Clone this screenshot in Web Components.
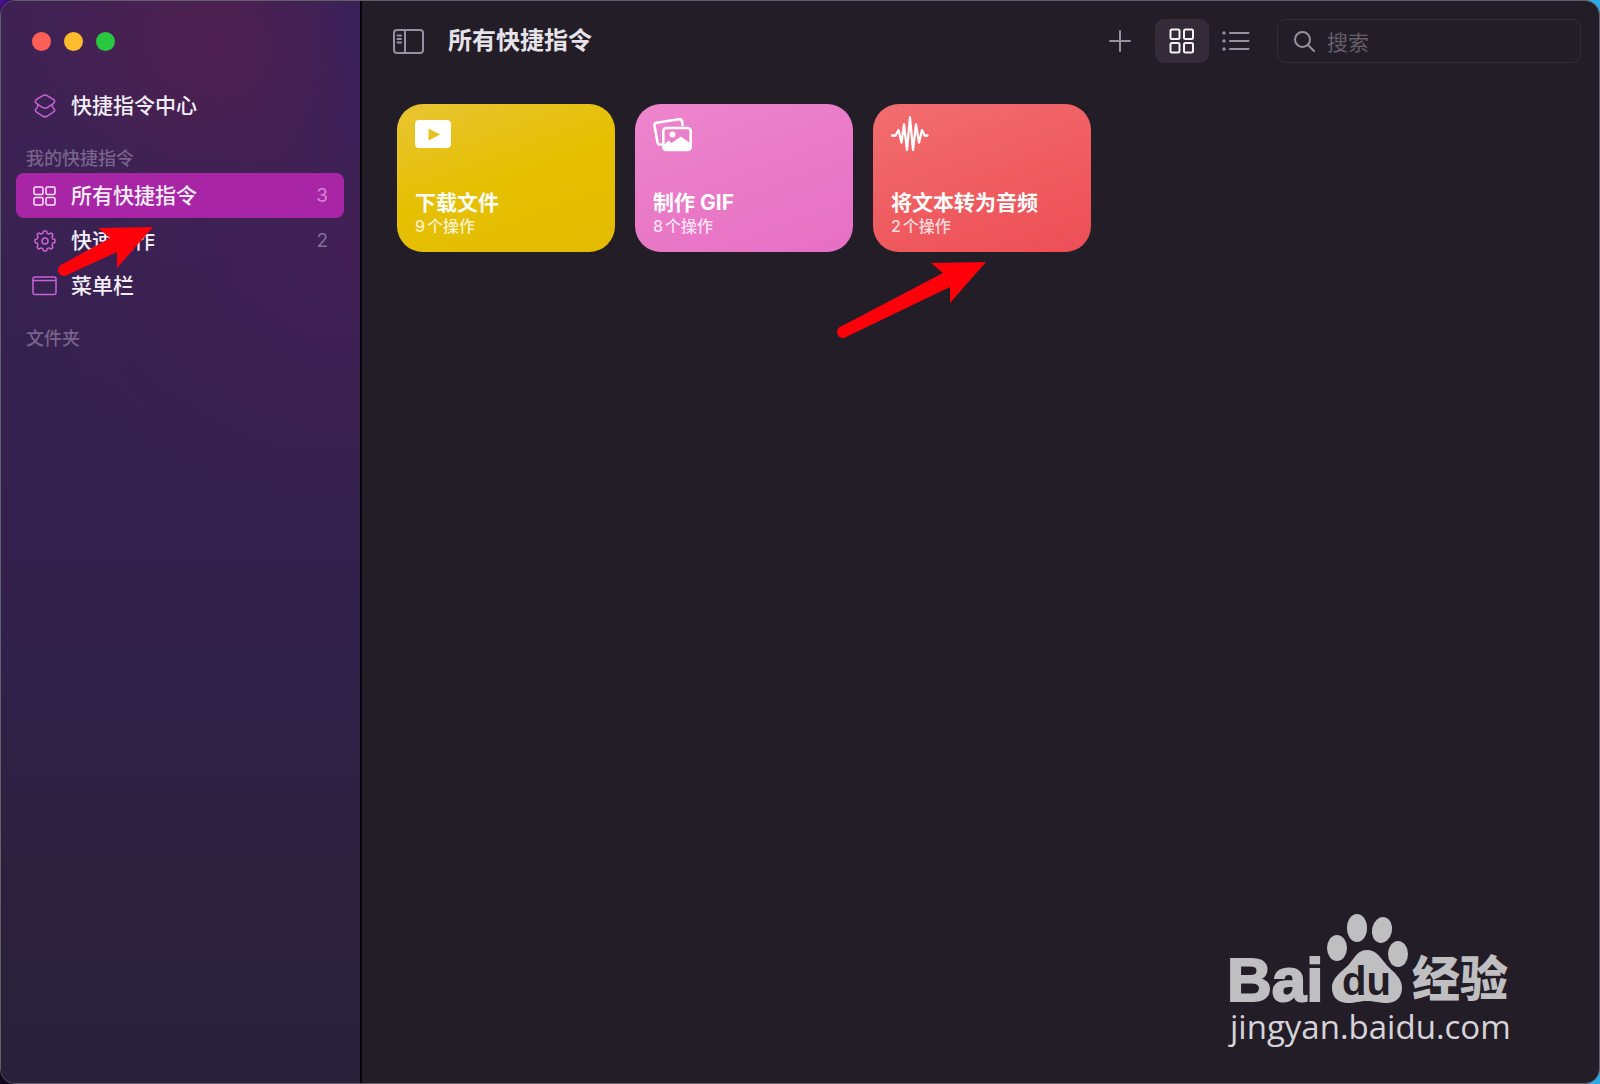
<!DOCTYPE html>
<html lang="zh-CN">
<head>
<meta charset="utf-8">
<meta name="viewport" content="width=device-width, initial-scale=1">
<title>快捷指令</title>
<style>
  body {
    margin: 0;
    background:
      radial-gradient(circle at 0 0, #4a1292, transparent 30px),
      linear-gradient(90deg, #12051f calc(100% - 30px), #2fa9e6 calc(100% - 12px));
    font-family: Inter, "Noto Sans CJK SC", sans-serif;
    color: #f3eef6;
  }
</style>
</head>
<body>
<shortcuts-window>
  <side-bar slot="sidebar">
    <side-item icon="gallery">快捷指令中心</side-item>
    <side-heading>我的快捷指令</side-heading>
    <side-item icon="grid" count="3" selected>所有快捷指令</side-item>
    <side-item icon="gear" count="2">快速操作</side-item>
    <side-item icon="menubar">菜单栏</side-item>
    <side-heading>文件夹</side-heading>
  </side-bar>
  <tool-bar slot="toolbar">所有快捷指令</tool-bar>
  <shortcut-card icon="video" color="yellow" count="9">下载文件</shortcut-card>
  <shortcut-card icon="photos" color="pink" count="8">制作 GIF</shortcut-card>
  <shortcut-card icon="wave" color="red" count="2">将文本转为音频</shortcut-card>
</shortcuts-window>
<red-arrow style="left: 56px; top: 226px" length="90"></red-arrow>
<red-arrow style="left: 835px; top: 261px" length="144"></red-arrow>
<baidu-mark></baidu-mark>

<script>
const icons = {
  gallery: {
    box: "0 0 22 24",
    body: `<path d="M8.500 1.800Q11 .2 13.500 1.800L19 5.200Q22.500 7.500 19 9.800L13.500 13.300Q11 14.800 8.500 13.300L3 9.800Q-.5 7.500 3 5.200Z"/><path d="M4.200 11 3 13.800Q-.5 16 3 18.300L8.500 22Q11 23.600 13.500 22L19 18.300Q22.500 16 19 13.800L17.800 11"/>`,
  },
  grid: {
    box: "0 0 23 20",
    body: `<rect x="1" y="1" width="9" height="7.500" rx="1.500"/><rect x="13" y="1" width="9" height="7.500" rx="1.500"/><rect x="1" y="11.500" width="9" height="7.500" rx="1.500"/><rect x="13" y="11.500" width="9" height="7.500" rx="1.500"/>`,
  },
  gridView: {
    box: "0 0 26 26",
    body: `<rect x="1.500" y="1.500" width="9" height="9.500" rx="1.500"/><rect x="15" y="1.500" width="9" height="9.500" rx="1.500"/><rect x="1.500" y="15" width="9" height="9.500" rx="1.500"/><rect x="15" y="15" width="9" height="9.500" rx="1.500"/>`,
  },
  gear: {
    box: "0 0 22 22",
    body: `<circle cx="11" cy="11" r="3"/><path d="M10 1H12Q12.600 1 12.700 1.600L13.100 3.200 15.200 4.100 16.600 3.200Q17.200 2.900 17.700 3.400L18.700 4.400Q19.100 4.900 18.800 5.400L17.900 6.800 18.800 8.900 20.400 9.300Q21 9.400 21 10V12Q21 12.600 20.400 12.700L18.800 13.100 17.900 15.200 18.800 16.600Q19.100 17.100 18.700 17.600L17.700 18.600Q17.200 19.100 16.600 18.800L15.200 17.900 13.100 18.800 12.700 20.400Q12.600 21 12 21H10Q9.400 21 9.300 20.400L8.900 18.800 6.800 17.900 5.400 18.800Q4.800 19.100 4.300 18.600L3.300 17.600Q2.900 17.100 3.200 16.600L4.100 15.200 3.200 13.100 1.600 12.700Q1 12.600 1 12V10Q1 9.400 1.600 9.300L3.200 8.900 4.100 6.800 3.200 5.400Q2.900 4.900 3.300 4.400L4.300 3.400Q4.800 2.900 5.400 3.200L6.800 4.100 8.900 3.200 9.300 1.600Q9.400 1 10 1Z"/>`,
  },
  menubar: {
    box: "0 0 25 20",
    body: `<rect x="1" y="1" width="23" height="17.500" rx="2"/><path d="M1 4.500H24"/>`,
  },
  sidebar: {
    box: "0 0 31 25",
    body: `<rect x="1" y="1" width="29" height="23" rx="3"/><path d="M12 1V24M4.500 6.500H8M4.500 10H8M4.500 13.500H8"/>`,
  },
  plus: {
    box: "0 0 22 22",
    body: `<path d="M11 1V21M1 11H21"/>`,
  },
  list: {
    box: "0 0 28 20",
    body: `<path d="M8 2H26.500M8 10H26.500M8 18H26.500"/><g fill="currentColor" stroke="none"><circle cx="2" cy="2" r="1.700"/><circle cx="2" cy="10" r="1.700"/><circle cx="2" cy="18" r="1.700"/></g>`,
  },
  search: {
    box: "0 0 21 21",
    body: `<circle cx="8.500" cy="8.500" r="7.500"/><path d="M14 14 20 20"/>`,
  },
  video: {
    box: "0 0 40 36",
    body: `<path fill="currentColor" stroke="none" fill-rule="evenodd" d="M4 4H32Q36 4 36 8V28Q36 32 32 32H4Q0 32 0 28V8Q0 4 4 4ZM13.500 12.500V24.500L25 18.500Z"/>`,
  },
  photos: {
    box: "0 0 40 36",
    body: `<path stroke-width="2.600" d="M8 28.500 6.500 28.500Q5 28.500 4.600 26.500L1.500 10Q1.200 7.300 3.500 6.800L26 3.200Q28.700 2.900 29.200 6L29.600 9"/><rect stroke-width="2.600" x="10.300" y="12" width="27.400" height="22" rx="3"/><circle cx="19.500" cy="18.500" r="3" fill="currentColor" stroke="none"/><path fill="currentColor" stroke="none" d="M10 29.500 15.500 24.500 18.500 27 28 20.500 38 28V32L35 35H13L10 32Z"/>`,
  },
  wave: {
    box: "0 0 40 36",
    body: `<path stroke-width="2.300" d="M1 19.500H4.500L7.500 14 10.500 26.500 13 8.500 16 34 19 1.500 22 34 25 8.500 28 26.500 31 14 33.500 19.500H36.500"/>`,
  },
};

class GlyphIcon extends HTMLElement {
  connectedCallback() {
    const icon = icons[this.getAttribute("name")];
    const [, , width, height] = icon.box.split(" ");
    this.attachShadow({ mode: "open" }).innerHTML = `
<style>
:host {
  display: inline-flex;
  flex: none;
}
svg {
  fill: none;
  stroke: currentColor;
  stroke-width: var(--stroke, 1.5);
  stroke-linecap: round;
  stroke-linejoin: round;
}
</style>
<svg width="${width}" height="${height}" viewBox="${icon.box}" aria-hidden="true">${icon.body}</svg>`;
  }
}

class ShortcutsWindow extends HTMLElement {
  constructor() {
    super();
    this.attachShadow({ mode: "open" }).innerHTML = `
<style>
:host {
  display: grid;
  grid-template-columns: 361px 1fr;
  box-sizing: border-box;
  min-height: 100vh;
  background: #231d28;
  border: 1px solid #655e6b;
  border-radius: 15px;
  overflow: hidden;
}
main {
  display: flex;
  flex-direction: column;
}
.cards {
  display: flex;
  flex-wrap: wrap;
  gap: 20px;
  padding: 23px 35px;
}
</style>
<slot name="sidebar"></slot>
<main>
  <slot name="toolbar"></slot>
  <div class="cards"><slot></slot></div>
</main>`;
  }
}

class SideBar extends HTMLElement {
  constructor() {
    super();
    this.attachShadow({ mode: "open" }).innerHTML = `
<style>
:host {
  display: block;
  padding: 0 16px 0 15px;
  border-right: 2px solid #08040c;
  background:
    radial-gradient(ellipse 190px 150px at 215px 45px, rgba(82, 32, 80, 0.8), transparent),
    radial-gradient(ellipse 130px 150px at 360px 30px, #33215c, transparent),
    radial-gradient(ellipse 330px 260px at 100% 260px, #411f55, transparent),
    linear-gradient(#3f2253 0, #3c2254 150px, #35214f 350px, #33204c 550px, #2e2148 700px, #2b213c 880px, #29203a 1084px);
}
.lights {
  display: flex;
  gap: 13px;
  padding: 31px 16px 32px;
}
.lights button {
  width: 19px;
  height: 19px;
  padding: 0;
  border: 0;
  border-radius: 50%;
}
.close { background: #ff5f57; }
.minimize { background: #febb2e; }
.zoom { background: #28c840; }
</style>
<div class="lights">
  <button class="close" aria-label="关闭"></button>
  <button class="minimize" aria-label="最小化"></button>
  <button class="zoom" aria-label="缩放"></button>
</div>
<nav><slot></slot></nav>`;
  }
}

class SideHeading extends HTMLElement {
  constructor() {
    super();
    this.attachShadow({ mode: "open" }).innerHTML = `
<style>
:host {
  display: block;
  padding: 17px 10px 0;
  color: #79638b;
  font-size: 18px;
  font-weight: 500;
  line-height: 28px;
}
</style>
<slot></slot>`;
  }
}

class SideItem extends HTMLElement {
  connectedCallback() {
    const count = this.getAttribute("count") || "";
    this.attachShadow({ mode: "open" }).innerHTML = `
<style>
:host {
  display: block;
}
button {
  display: flex;
  align-items: center;
  width: 100%;
  height: 45px;
  padding: 0 16px;
  border: 0;
  border-radius: 8px;
  background: none;
  color: inherit;
  font: 500 21px/28px Inter, "Noto Sans CJK SC", sans-serif;
  text-align: left;
}
.icon {
  display: flex;
  justify-content: center;
  width: 25px;
  margin-right: 14px;
  color: #c863d6;
}
.label {
  flex: 1;
}
.count {
  color: #83709a;
  font-size: 19px;
  font-weight: 400;
}
:host([selected]) button { background: #a826a6; }
:host([selected]) .icon { color: #fbe6fb; }
:host([selected]) .count { color: #d786d5; }
</style>
<button>
  <span class="icon"><glyph-icon name="${this.getAttribute("icon")}"></glyph-icon></span>
  <span class="label"><slot></slot></span>
  <span class="count">${count}</span>
</button>`;
  }
}

class ToolBar extends HTMLElement {
  constructor() {
    super();
    this.attachShadow({ mode: "open" }).innerHTML = `
<style>
:host {
  display: flex;
  align-items: center;
  height: 44px;
  padding: 18px 18px 18px 30px;
  color: #99909f;
}
h1 {
  flex: 1;
  margin: 0 0 0 23px;
  color: #e6e3e8;
  font-size: 24px;
  font-weight: 700;
  line-height: 36px;
}
button {
  display: flex;
  justify-content: center;
  align-items: center;
  height: 44px;
  padding: 0;
  border: 0;
  border-radius: 9px;
  background: none;
  color: inherit;
  --stroke: 2;
}
.add { width: 44px; margin-right: 13px; }
.view { width: 54px; }
.on {
  background: #332c38;
  color: #f4f0f6;
}
label {
  display: flex;
  align-items: center;
  box-sizing: border-box;
  width: 304px;
  height: 44px;
  margin-left: 14px;
  padding: 0 16px;
  gap: 12px;
  border: 1px solid #342e39;
  border-radius: 9px;
  --stroke: 2;
}
input {
  flex: 1;
  min-width: 0;
  padding: 4px 0 0;
  border: 0;
  outline: 0;
  background: none;
  color: #e6e3e8;
  font: 400 21px/28px Inter, "Noto Sans CJK SC", sans-serif;
}
input::placeholder { color: #655e6a; opacity: 1; }
.toggle { width: 33px; }
</style>
<button class="toggle" aria-label="边栏"><glyph-icon name="sidebar"></glyph-icon></button>
<h1><slot></slot></h1>
<button class="add" aria-label="新建"><glyph-icon name="plus"></glyph-icon></button>
<button class="view on" aria-label="网格"><glyph-icon name="gridView"></glyph-icon></button>
<button class="view" aria-label="列表"><glyph-icon name="list"></glyph-icon></button>
<label>
  <glyph-icon name="search"></glyph-icon>
  <input type="text" placeholder="搜索" aria-label="搜索">
</label>`;
  }
}

const cardColors = {
  yellow: "linear-gradient(160deg, #e9c434 0%, #e5c000 50%, #e3ba00 100%)",
  pink: "linear-gradient(160deg, #ee86cd 0%, #e97ac7 50%, #e76fc4 100%)",
  red: "linear-gradient(160deg, #f26e70 0%, #ef5c60 55%, #ed4e56 100%)",
};

class ShortcutCard extends HTMLElement {
  connectedCallback() {
    this.attachShadow({ mode: "open" }).innerHTML = `
<style>
:host {
  display: block;
}
button {
  display: flex;
  flex-direction: column;
  align-items: flex-start;
  box-sizing: border-box;
  width: 218px;
  height: 148px;
  padding: 12px 18px 15px;
  border: 0;
  border-radius: 26px;
  background: ${cardColors[this.getAttribute("color")]};
  color: white;
  font-family: inherit;
  text-align: left;
}
.title {
  margin-top: auto;
  font-size: 21px;
  font-weight: 700;
  line-height: 24px;
}
.count {
  color: rgba(255, 255, 255, 0.8);
  font-size: 16px;
  font-weight: 500;
  line-height: 22px;
}
.number {
  margin-right: 2px;
}
</style>
<button>
  <glyph-icon name="${this.getAttribute("icon")}"></glyph-icon>
  <span class="title"><slot></slot></span>
  <span class="count"><span class="number">${this.getAttribute("count")}</span>个操作</span>
</button>`;
  }
}

// Arrow drawn over the window; length is the horizontal run from tail to tip
class RedArrow extends HTMLElement {
  connectedCallback() {
    const length = Number(this.getAttribute("length"));
    const tip = length + 7;
    const drop = Math.round(length / 2);
    this.attachShadow({ mode: "open" }).innerHTML = `
<style>
:host {
  position: absolute;
  pointer-events: none;
}
svg {
  display: block;
}
</style>
<svg width="${tip + 1}" height="${drop + 8}" fill="#ff000a" aria-hidden="true">
  <circle cx="8" cy="${drop - 1}" r="6"/>
  <path d="M5 ${drop - 6} L${tip - 43} 12 L${tip - 55} 2 L${tip} 1 L${tip - 36} 42 L${tip - 36} 26 L11 ${drop + 4}Z"/>
</svg>`;
  }
}

class BaiduMark extends HTMLElement {
  constructor() {
    super();
    this.attachShadow({ mode: "open" }).innerHTML = `
<style>
:host {
  position: absolute;
  right: 86px;
  bottom: 32px;
  color: #bfbec1;
  pointer-events: none;
}
svg {
  display: block;
  font-weight: 700;
}
.latin { font-family: "Liberation Sans", sans-serif; }
.bai { stroke: currentColor; stroke-width: 2; }
.cjk { font-family: "Noto Sans CJK SC", sans-serif; font-weight: 900; }
.url { font-family: "Open Sans", sans-serif; font-weight: 500; fill: #d6d4d8; }
</style>
<svg width="288" height="140" fill="currentColor">
  <text class="latin bai" x="1" y="89" font-size="62">Bai</text>
  <ellipse cx="111" cy="36" rx="10" ry="13"/>
  <ellipse cx="131" cy="16" rx="10" ry="14"/>
  <ellipse cx="156" cy="18" rx="10" ry="13" transform="rotate(12 156 18)"/>
  <ellipse cx="172" cy="42" rx="10" ry="13"/>
  <path d="M141 38C150 38 154 45 159 51C165 59 176 64 176 76C176 86 169 91 161 91C153 91 148 89 141 89C134 89 130 91 122 91C113 91 106 86 106 76C106 64 118 59 124 51C129 45 132 38 141 38Z"/>
  <text class="latin" x="116" y="83" font-size="40" fill="#231d28">du</text>
  <text class="cjk" x="186" y="84" font-size="48">经验</text>
  <text class="url" x="4" y="127" font-size="33">jingyan.baidu.com</text>
</svg>`;
  }
}

customElements.define("glyph-icon", GlyphIcon);
customElements.define("shortcuts-window", ShortcutsWindow);
customElements.define("side-bar", SideBar);
customElements.define("side-heading", SideHeading);
customElements.define("side-item", SideItem);
customElements.define("tool-bar", ToolBar);
customElements.define("shortcut-card", ShortcutCard);
customElements.define("red-arrow", RedArrow);
customElements.define("baidu-mark", BaiduMark);
</script>
</body>
</html>
